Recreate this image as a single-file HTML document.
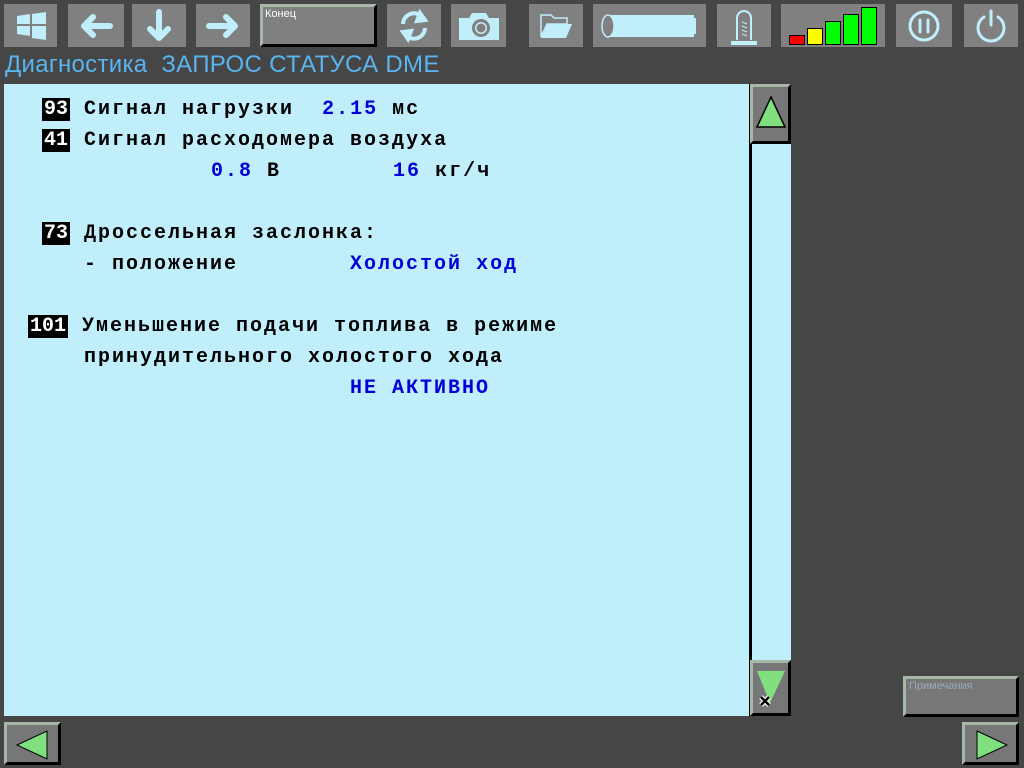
<!DOCTYPE html>
<html><head><meta charset="utf-8"><style>
*{margin:0;padding:0;box-sizing:border-box}
body{width:1024px;height:768px;background:#464646;position:relative;overflow:hidden;font-family:"Liberation Sans",sans-serif}
.b{position:absolute;top:4px;height:43px;background:#808080;display:flex;align-items:center;justify-content:center}
.t{position:absolute;font-family:"Liberation Mono",monospace;font-weight:bold;font-size:20px;letter-spacing:2px;line-height:24px;color:#000;white-space:pre}
.bl{color:#0000d8}
.n{background:#000;color:#fff;letter-spacing:0;padding:0 2px}
.r{position:absolute;background:#777;border-top:3px solid #a8b8a8;border-left:3px solid #a8b8a8;border-bottom:3px solid #000;border-right:3px solid #000}
</style></head><body>
<div class="b" style="left:4px;width:53px"><svg width="40" height="30"><g fill="#c0eefa"><path d="M6 5l13-2v10H6z"/><path d="M21 3l14-2v12H21z"/><path d="M6 15h13v10l-13-2z"/><path d="M21 15h14v14l-14-2z"/></g></svg></div>
<div class="b" style="left:68px;width:56px"><svg width="36" height="30" fill="none" stroke="#c0eefa" stroke-width="6" stroke-linecap="round" stroke-linejoin="round"><path d="M32 15H6M15 6L6 15l9 9"/></svg></div>
<div class="b" style="left:132px;width:54px"><svg width="30" height="34" fill="none" stroke="#c0eefa" stroke-width="6" stroke-linecap="round" stroke-linejoin="round"><path d="M15 3v26M6 20l9 9 9-9"/></svg></div>
<div class="b" style="left:196px;width:54px"><svg width="36" height="30" fill="none" stroke="#c0eefa" stroke-width="6" stroke-linecap="round" stroke-linejoin="round"><path d="M4 15h26M21 6l9 9-9 9"/></svg></div>
<div class="r" style="left:260px;top:4px;width:117px;height:43px;background:#808080;color:#fff;font-size:11px;padding:1px 2px">Конец</div>
<div class="b" style="left:387px;width:54px"><svg width="36" height="36" fill="none" stroke="#c0eefa" stroke-width="4"><path d="M7 16a11 11 0 0 1 20-6"/><path d="M29 20a11 11 0 0 1-20 6"/><path d="M24 5l5 7-8 1z" fill="#c0eefa"/><path d="M12 31l-5-7 8-1z" fill="#c0eefa"/></svg></div>
<div class="b" style="left:451px;width:55px"><svg width="44" height="32"><path d="M2 8h10l3-5h14l3 5h10v22H2z" fill="#c0eefa"/><circle cx="24" cy="18" r="9" fill="#808080"/><circle cx="24" cy="18" r="6" fill="#c0eefa"/><circle cx="24" cy="18" r="4.5" fill="#808080"/></svg></div>
<div class="b" style="left:529px;width:54px"><svg width="36" height="30"><path d="M3 4h10l3 3h13v6H9L3 26z" fill="none" stroke="#c0eefa" stroke-width="1.5"/><path d="M9 13h25l-6 14H3z" fill="#c0eefa"/></svg></div>
<div class="b" style="left:593px;width:113px"><svg width="100" height="26"><path d="M8 2h86v3h2v16h-2v3H8z" fill="#c0eefa"/><ellipse cx="8" cy="13" rx="6" ry="11" fill="#808080" stroke="#c0eefa" stroke-width="1.5"/></svg></div>
<div class="b" style="left:717px;width:54px"><svg width="28" height="40" fill="none" stroke="#c0eefa" stroke-width="2"><path d="M7 34V12a7 7 0 0 1 14 0v22M2 36h24v2H2z"/><path d="M12 16l5 2M12 20l5 2M12 24l5 2M12 28l5 2" stroke-width="1"/></svg></div>
<div class="b" style="left:781px;width:104px;display:block"><svg width="104" height="43"><g stroke="#000" stroke-width="1"><rect x="8.5" y="31.5" width="15" height="9" fill="#f00"/><rect x="26.5" y="24.5" width="15" height="16" fill="#ff0"/><rect x="44.5" y="17.5" width="15" height="23" fill="#0f0"/><rect x="62.5" y="10.5" width="15" height="30" fill="#0f0"/><rect x="80.5" y="3.5" width="15" height="37" fill="#0f0"/></g></svg></div>
<div class="b" style="left:896px;width:56px"><svg width="34" height="34" fill="none" stroke="#c0eefa" stroke-width="3"><circle cx="17" cy="17" r="14"/><path d="M13 11v12M21 11v12" stroke-linecap="round"/></svg></div>
<div class="b" style="left:964px;width:54px"><svg width="34" height="36" fill="none" stroke="#c0eefa" stroke-width="3" stroke-linecap="round"><path d="M10 9a13 13 0 1 0 14 0"/><path d="M17 3v14"/></svg></div>
<div style="position:absolute;left:5px;top:51px;color:#5ab4f0;font-size:24px;white-space:pre;letter-spacing:0.3px">Диагностика  ЗАПРОС СТАТУСА DME</div>
<div style="position:absolute;left:4px;top:84px;width:745px;height:632px;background:#c0eefa"></div>
<div class="t" style="left:42px;top:98px"><span class="n">93</span> Сигнал нагрузки  <span class="bl">2.15</span> мс</div>
<div class="t" style="left:42px;top:129px"><span class="n">41</span> Сигнал расходомера воздуха</div>
<div class="t" style="left:211px;top:160px"><span class="bl">0.8</span> В        <span class="bl">16</span> кг/ч</div>
<div class="t" style="left:42px;top:222px"><span class="n">73</span> Дроссельная заслонка:</div>
<div class="t" style="left:84px;top:253px">- положение        <span class="bl">Холостой ход</span></div>
<div class="t" style="left:28px;top:315px"><span class="n">101</span> Уменьшение подачи топлива в режиме</div>
<div class="t" style="left:84px;top:346px">принудительного холостого хода</div>
<div class="t bl" style="left:350px;top:377px">НЕ АКТИВНО</div>
<div style="position:absolute;left:749px;top:84px;width:42px;height:632px;background:#c0eefa;border-left:3px solid #000"></div>
<div class="r" style="left:750px;top:84px;width:41px;height:60px"><svg width="35" height="54"><path d="M18 10L32 40H4z" fill="#80e080" stroke="#000" stroke-width="1.5"/></svg></div>
<div class="r" style="left:750px;top:660px;width:41px;height:56px"><svg width="35" height="50"><path d="M4 8h28L17 40z" fill="#80e080"/><path d="M8 34l8 8M16 34l-8 8" stroke="#fff" stroke-width="5"/><path d="M8 34l8 8M16 34l-8 8" stroke="#000" stroke-width="2.5"/></svg></div>
<div class="r" style="left:903px;top:676px;width:116px;height:41px;background:#777;color:#9ab;font-size:11px;padding:1px 3px">Примечания</div>
<div class="r" style="left:4px;top:722px;width:57px;height:43px"><svg width="51" height="37"><path d="M10 20L40 6v28z" fill="#80e080" stroke="#000" stroke-width="1"/></svg></div>
<div class="r" style="left:962px;top:722px;width:57px;height:43px"><svg width="51" height="37"><path d="M12 6l30 14-30 14z" fill="#80e080" stroke="#000" stroke-width="1"/></svg></div>
</body></html>
